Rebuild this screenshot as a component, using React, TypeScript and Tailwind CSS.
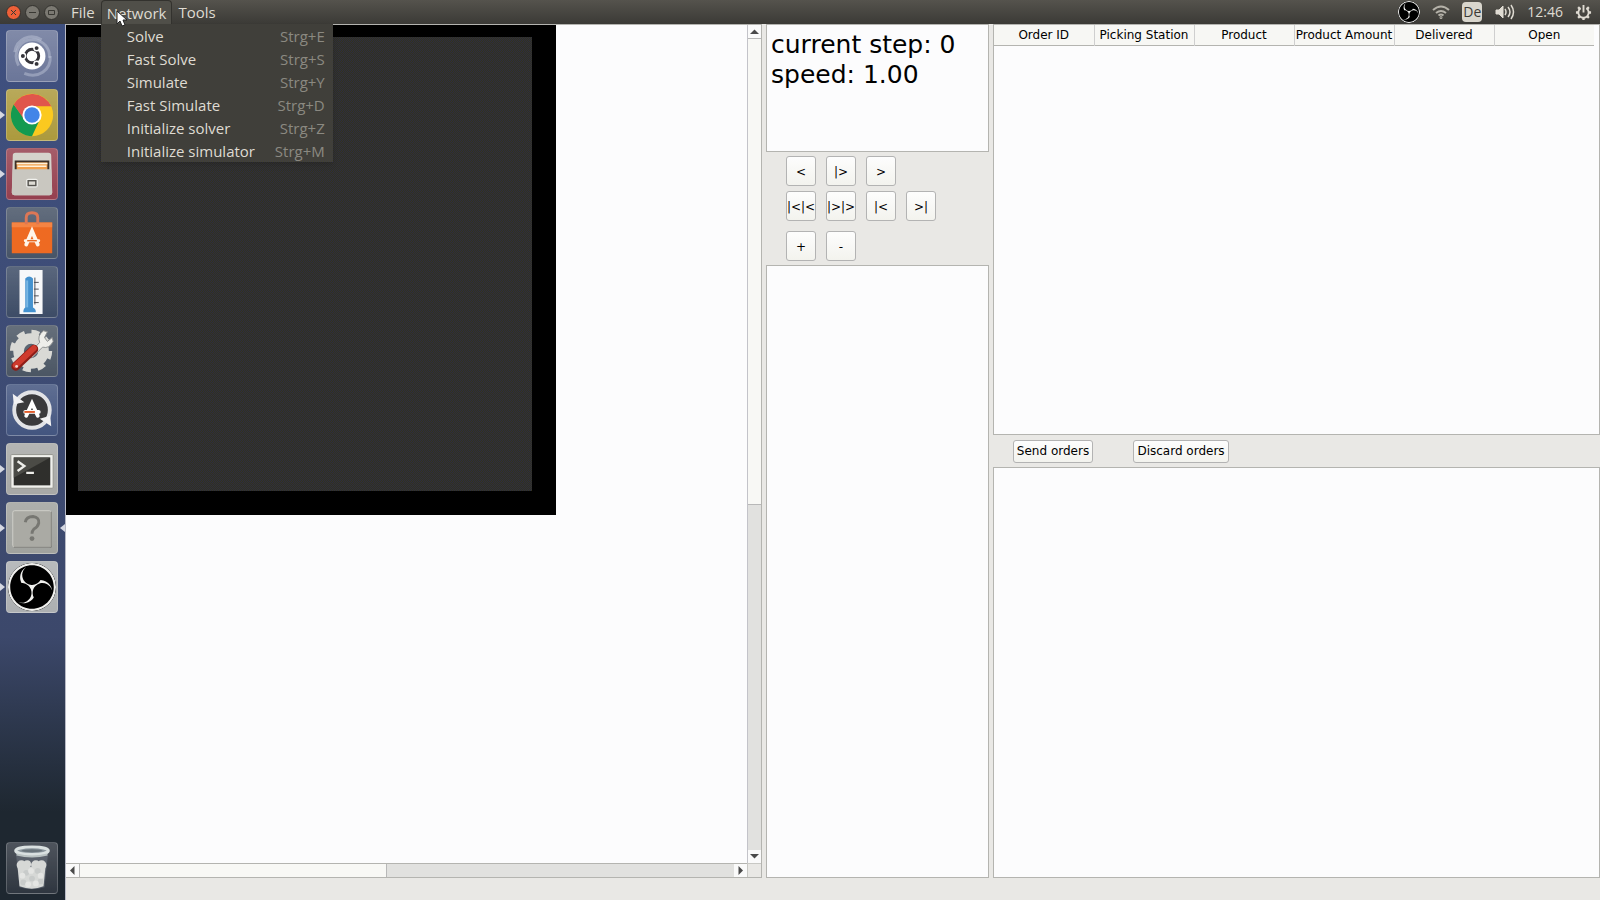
import { ReactNode } from "react";
import { SiObsstudio } from "react-icons/si";

const menuItems = [
  { label: "Solve", shortcut: "Strg+E" },
  { label: "Fast Solve", shortcut: "Strg+S" },
  { label: "Simulate", shortcut: "Strg+Y" },
  { label: "Fast Simulate", shortcut: "Strg+D" },
  { label: "Initialize solver", shortcut: "Strg+Z" },
  { label: "Initialize simulator", shortcut: "Strg+M" },
];

const columns = [
  "Order ID",
  "Picking Station",
  "Product",
  "Product Amount",
  "Delivered",
  "Open",
];

const controlRows = [
  { className: "", labels: ["<", "|>", ">"] },
  { className: "mt-[5px]", labels: ["|<|<", "|>|>", "|<", ">|"] },
  { className: "mt-[10px]", labels: ["+", "-"] },
];

const ObsIcon = ({ className }: { className: string }) => (
  <SiObsstudio className={`rounded-full bg-black text-[#f0f0ee] ${className}`} />
);

const UbuntuIcon = () => (
  <svg viewBox="0 0 52 52" className="size-full">
    <g fill="none" stroke="#c3c9dc" strokeOpacity=".45" strokeWidth="3">
      <path d="M12 36C5 22 14 8 28 9c10 1 17 9 16 19" />
      <path d="M8 22C10 8 24 2 36 9M18 44c14 6 28-3 27-18" />
    </g>
    <circle cx="26" cy="26" r="14" fill="#fff" />
    <circle cx="26" cy="26" r="7" fill="none" stroke="#35343a" strokeWidth="3" />
    <g stroke="#fff" strokeWidth="1.5" fill="#35343a">
      <circle cx="16.5" cy="26" r="2.8" />
      <circle cx="30.8" cy="17.8" r="2.8" />
      <circle cx="30.8" cy="34.2" r="2.8" />
    </g>
  </svg>
);

const ChromeIcon = () => (
  <svg viewBox="0 0 52 52" className="size-full">
    <circle cx="26" cy="26" r="22" fill="#fbc91f" />
    <path d="M7 15A22 22 0 0 0 26 48L34 31 26 26 18 30z" fill="#149a50" />
    <path d="M7 15 18 31 26 17H46A22 22 0 0 0 7 15z" fill="#e0564b" />
    <circle cx="26" cy="26" r="10" fill="#fff" />
    <circle cx="26" cy="26" r="8" fill="#4285e8" />
  </svg>
);

const FilesIcon = () => (
  <svg viewBox="0 0 52 52" className="size-full">
    <path d="M9 4h34q3 0 3 3l1 38q0 3-3 3H8q-3 0-3-3L6 7q0-3 3-3z" fill="#d5d3cc" />
    <path d="M8 12h36v10H8z" fill="#3c3029" />
    <path d="M10 14h32v9H10z" fill="#f0a04e" />
    <path d="M10 15h32M11 18h30" stroke="#fff1db" strokeWidth="1.5" />
    <path d="M6 21h40l1 24q0 3-3 3H8q-3 0-3-3z" fill="#c9c7c0" />
    <rect x="20" y="31" width="12" height="9" rx="2" fill="#f2f2ee" />
    <rect x="22" y="33" width="8" height="5" fill="#dedcd5" stroke="#55534e" strokeWidth="1.5" />
  </svg>
);

const SoftwareIcon = () => (
  <svg viewBox="0 0 52 52" className="size-full">
    <path d="M5 15h42v32H5z" fill="#ee6a22" />
    <path d="M5 15h42v5H5z" fill="#f58443" />
    <path d="M20 17V10q0-5 6-5t6 5v7" fill="none" stroke="#dc7756" strokeWidth="3" />
    <g stroke="#fff5e9" strokeWidth="4" strokeLinecap="round" fill="none">
      <path d="M20 38 26 24 32 38" />
      <path d="M19 34h14" strokeWidth="3" />
    </g>
    <path d="M21 34h10" stroke="#e66822" strokeWidth="1.5" />
  </svg>
);

const ThermometerIcon = () => (
  <svg viewBox="0 0 52 52" className="size-full">
    <path d="M13 3h24v46H13z" fill="#f7f8fa" />
    <path d="M19 12q4-4 8 0v30q3 1 3 5H17q0-4 2-5z" fill="#4592cf" />
    <path d="M21 14v28" stroke="#79b7e4" strokeWidth="2" />
    <path d="M29 11v28M28 16h5M28 23h5M28 30h5M28 37h5" stroke="#4a4d55" strokeWidth="1" />
  </svg>
);

const SettingsIcon = () => (
  <svg viewBox="0 0 52 52" className="size-full">
    <circle cx="25" cy="26" r="19" fill="none" stroke="#d9d9d5" strokeWidth="6" strokeDasharray="8 6.9" />
    <circle cx="25" cy="26" r="13" fill="none" stroke="#d9d9d5" strokeWidth="11" />
    <path d="m23 29 11-12q-3-7 4-12l4 1-3 6 3 4 5-4 1 4q-4 8-11 6L26 33z" fill="#eeeeea" stroke="#8c8f8f" strokeWidth="1" />
    <path d="M9 42 28 24" stroke="#8e1d17" strokeWidth="9" strokeLinecap="round" />
    <path d="M9 41 28 23" stroke="#cf3b2e" strokeWidth="6" strokeLinecap="round" />
    <circle cx="10" cy="42" r="1.5" fill="#f4d8d0" />
  </svg>
);

const UpdaterIcon = () => (
  <svg viewBox="0 0 52 52" className="size-full">
    <circle cx="26" cy="26" r="17" fill="#3a3a3c" />
    <circle cx="26" cy="26" r="18.5" fill="none" stroke="#e2e3e6" strokeWidth="4" />
    <path d="M6 9l1 11 11-2zM46 43l-1-11-11 3z" fill="#f1f1f3" />
    <path d="M20 32 26 19 32 32M19 28h14" fill="none" stroke="#fff" strokeWidth="4" strokeLinecap="round" />
    <path d="M18 28h11" stroke="#e05b2a" strokeWidth="2" />
  </svg>
);

const TerminalIcon = () => (
  <svg viewBox="0 0 52 52" className="size-full">
    <rect x="4" y="11" width="44" height="35" rx="1" fill="#f0f0ec" stroke="#92928d" />
    <rect x="7" y="14" width="38" height="29" fill="#2f2f2c" />
    <path d="M7 14h38L7 35z" fill="#4b4b46" />
    <path d="m11 18 7 5-7 5M20 30h8" fill="none" stroke="#eeeeea" strokeWidth="2.5" />
  </svg>
);

const UnknownIcon = () => (
  <svg viewBox="0 0 52 52" className="size-full">
    <rect x="6" y="8" width="40" height="38" rx="2" fill="#aaaaa4" stroke="#d0d0ca" />
    <path d="M7 46h39V9" fill="none" stroke="#74746f" strokeWidth="1" />
    <path d="M19 20q1-6 8-6 7 1 6 7-1 4-5 6-2 2-2 5" fill="none" stroke="#777772" strokeWidth="3" />
    <circle cx="26" cy="37" r="2.5" fill="#777772" />
  </svg>
);

const TrashIcon = () => (
  <svg viewBox="0 0 52 52" className="size-full">
    <path d="M9 8h34l-4 38q-13 4-26 0z" fill="#7c8490" fillOpacity=".4" />
    <g fill="#d6d8d6">
      <circle cx="15" cy="23" r="5" />
      <circle cx="21" cy="22" r="4" />
      <circle cx="30" cy="23" r="5" />
      <circle cx="36" cy="23" r="5" />
      <path d="M11 25h29l-2 20q-12 5-25 0z" />
    </g>
    <g fill="#c8cbca">
      <circle cx="20" cy="31" r="3" />
      <circle cx="32" cy="29" r="3" />
      <circle cx="26" cy="37" r="3" />
      <circle cx="17" cy="41" r="3" />
      <circle cx="35" cy="40" r="3" />
    </g>
    <g fill="#e4e5e3">
      <circle cx="25" cy="29" r="3" />
      <circle cx="16" cy="34" r="3" />
      <circle cx="35" cy="34" r="3" />
      <circle cx="22" cy="43" r="3" />
      <circle cx="30" cy="42" r="3" />
    </g>
    <ellipse cx="26" cy="8" rx="17" ry="4" fill="#8b969d" stroke="#d9e0e0" strokeWidth="3" />
    <ellipse cx="26" cy="8" rx="11" ry="1.5" fill="#68737a" />
    <path d="M10 12q16 4 32 0" fill="none" stroke="#b9c2c2" strokeWidth="2" />
  </svg>
);

const launchers = [
  { name: "Dash", tile: "bg-[#6b7699]", icon: <UbuntuIcon />, running: false },
  { name: "Chrome", tile: "bg-[#ac9a3d]", icon: <ChromeIcon />, running: true },
  { name: "Files", tile: "bg-[#95404f]", icon: <FilesIcon />, running: true },
  { name: "Software", tile: "bg-[#475467]", icon: <SoftwareIcon />, running: false },
  { name: "Monitor", tile: "bg-[#3d4c66]", icon: <ThermometerIcon />, running: false },
  { name: "Settings", tile: "bg-[#4b5664]", icon: <SettingsIcon />, running: false },
  { name: "Updater", tile: "bg-[#43557f]", icon: <UpdaterIcon />, running: false },
  { name: "Terminal", tile: "bg-[#a7a8a6]", icon: <TerminalIcon />, running: true },
  { name: "Application", tile: "bg-[#a0a29e]", icon: <UnknownIcon />, running: true, active: true },
  { name: "OBS", tile: "bg-[#acafb1]", icon: <ObsIcon className="size-12" />, running: true },
];

const Launcher = ({
  name,
  tile,
  icon,
  running,
  active,
}: {
  name: string;
  tile: string;
  icon: ReactNode;
  running?: boolean;
  active?: boolean;
}) => (
  <button aria-label={name} className="relative flex w-full justify-center pr-px">
    {running && (
      <svg viewBox="0 0 5 8" className="absolute left-0 top-[22px] h-2 w-[5px] fill-[#d5d8e2]">
        <path d="M0 0 5 4 0 8z" />
      </svg>
    )}
    <span
      className={`flex size-[52px] items-center justify-center rounded border border-white/20 bg-linear-to-b from-white/15 to-transparent ${tile}`}
    >
      {icon}
    </span>
    {active && (
      <svg viewBox="0 0 5 8" className="absolute right-0 top-[22px] h-2 w-[5px] fill-[#d5d8e2]">
        <path d="M5 0 0 4 5 8z" />
      </svg>
    )}
  </button>
);

const WindowButton = ({ name, color, path }: { name: string; color: string; path: string }) => (
  <button aria-label={name} className={`size-[15px] rounded-full border border-[#33322e] ${color}`}>
    <svg viewBox="0 0 13 13" className="size-full fill-none stroke-[#393833]">
      <path d={path} />
    </svg>
  </button>
);

const TopBar = () => (
  <header className="relative z-10 flex h-6 shrink-0 items-center justify-between bg-linear-to-b from-[#55534d] to-[#3b3a36] font-['Open_Sans','Noto_Sans',sans-serif] text-sm text-[#dfdbd2]">
    <div className="flex h-full items-center">
      <div className="flex w-[65px] gap-1 pl-[6px]">
        <WindowButton name="Close" color="bg-[#ee6038]" path="m4 4 5 5M9 4l-5 5" />
        <WindowButton name="Minimize" color="bg-[#7b7972]" path="M3 6.5h7" />
        <WindowButton name="Maximize" color="bg-[#7b7972]" path="M3.5 4.5h6v4h-6z" />
      </div>
      <nav className="flex h-full items-center text-[15px] leading-5">
        <button className="h-full px-[6px]">File</button>
        <div className="relative h-full">
          <button className="h-full rounded-t border border-b-0 border-[#33322e] bg-[#504f49] px-[5px]">
            Network
          </button>
          <ul className="absolute left-0 top-full w-[232px] bg-[#403f3a] shadow-md">
            {menuItems.map(({ label, shortcut }) => (
              <li key={label}>
                <button className="flex h-[23px] w-full items-center justify-between pl-[26px] pr-2">
                  <span>{label}</span>
                  <span className="text-[#8b8981]">{shortcut}</span>
                </button>
              </li>
            ))}
          </ul>
        </div>
        <button className="h-full px-[6px]">Tools</button>
      </nav>
      <svg viewBox="0 0 12 18" className="absolute left-[116px] top-[10px] h-[18px] w-3">
        <path d="M1 1v13l3-3 2 5 3-1-2-5h4z" fill="#fff" stroke="#222" />
      </svg>
    </div>
    <div className="flex items-center pr-2">
      <ObsIcon className="size-[22px]" />
      <svg viewBox="0 0 18 14" className="ml-3 h-[14px] w-[18px] fill-none stroke-[#b5b2a9] stroke-2">
        <path d="M1 5q8-7 16 0M4 8q5-4 10 0M6.500 10.500q2.500-2 5 0" />
        <circle cx="9" cy="12.500" r=".5" />
      </svg>
      <span className="ml-3 mr-px flex h-5 w-5 items-center justify-center rounded-sm bg-[#d9d6cd] text-sm font-medium text-[#3c3b37]">
        De
      </span>
      <svg viewBox="0 0 20 16" className="ml-3 h-4 w-5 fill-none stroke-[#dfdbd2]">
        <path d="M1 6h3l4-4v12l-4-4H1z" fill="#dfdbd2" />
        <path d="M10 5q2 3 0 6M13 3q4 5 0 10M16 1q5 7 0 14" strokeWidth="1.5" />
      </svg>
      <span className="ml-3">12:46</span>
      <svg viewBox="0 0 18 18" className="ml-3 size-[17px] fill-none stroke-[#dfdbd2]">
        <path d="M6 4.500a5.500 5.500 0 1 0 6 0M9 1v8" strokeWidth="2" />
        <path d="M1 9h2.500M14.500 9H17M3.300 14.700l2-2M14.700 14.700l-2-2M9 17v-3M3.300 3.300l2 2M14.700 3.300l-2 2" strokeWidth="2.500" />
      </svg>
    </div>
  </header>
);

const arrowPaths = {
  up: "M4.500 2.500 9 7H0z",
  down: "M0 2h9L4.500 6.500z",
  left: "M6.500 0v9L2 4.500z",
  right: "M2.500 0v9L7 4.500z",
};

const ScrollButton = ({ direction }: { direction: keyof typeof arrowPaths }) => (
  <button
    aria-label={`Scroll ${direction}`}
    className="flex size-[13px] shrink-0 items-center justify-center bg-[#fafafa]"
  >
    <svg viewBox="0 0 9 9" className="size-[9px] fill-[#4a4a4a]">
      <path d={arrowPaths[direction]} />
    </svg>
  </button>
);

const NetworkView = () => (
  <section className="grid min-w-0 flex-1 grid-cols-[1fr_14px] grid-rows-[1fr_14px] border-r border-b border-t border-[#b4b4b0]">
    <div className="overflow-hidden bg-[#fcfcfd]">
      <div className="w-fit bg-black pb-6 pl-3 pr-6 pt-3">
        <div className="size-[454px] bg-[repeating-conic-gradient(#2d2d40_0_25%,#32321e_0_50%)] bg-size-[2px_2px]" />
      </div>
    </div>
    <div className="flex flex-col border-l border-[#c3c3c9]">
      <ScrollButton direction="up" />
      <div className="flex-[466] border-y border-[#b8b8b8] bg-[#f8f8f5]" />
      <div className="flex-[345] bg-[#e1e1df]" />
      <ScrollButton direction="down" />
    </div>
    <div className="flex border-t border-[#b4b4b0]">
      <ScrollButton direction="left" />
      <div className="flex-[306] border-x border-[#b8b8b8] bg-[#f8f8f5]" />
      <div className="flex-[348] bg-[#e1e1df]" />
      <ScrollButton direction="right" />
    </div>
    <div className="border-l border-t border-[#c8c8c4]" />
  </section>
);

const panel = "border border-[#b4b4b0] bg-[#fcfcfd]";
const button =
  "rounded-[3px] border border-[#b3b3b3] bg-linear-to-b from-[#fdfdfd] to-[#f3f3ee]";

const StepControls = () => (
  <section className="flex w-[223px] shrink-0 flex-col">
    <div className={`h-32 px-1 pt-[5px] text-[25px] leading-[30px] ${panel}`}>
      <p>current step: 0</p>
      <p>speed: 1.00</p>
    </div>
    <div className="h-[113px] pl-5 pt-1 text-xs">
      {controlRows.map(({ className, labels }) => (
        <div key={labels[0]} className={`flex gap-[10px] ${className}`}>
          {labels.map((label) => (
            <button
              key={label}
              className={`flex size-[30px] items-center justify-center whitespace-nowrap pt-px ${button}`}
            >
              {label}
            </button>
          ))}
        </div>
      ))}
    </div>
    <div className={`flex-1 ${panel}`} />
  </section>
);

const Orders = () => (
  <section className="flex w-[607px] shrink-0 flex-col text-xs">
    <div className={`min-h-0 flex-[411] pr-[5px] ${panel}`}>
      <table className="w-full table-fixed border-collapse">
        <thead>
          <tr className="h-5 border-b border-[#b4b4b0] bg-[#f7f7f4]">
            {columns.map((column) => (
              <th
                key={column}
                className="whitespace-nowrap border-r border-[#cfcfcf] p-0 font-normal last:border-r-0"
              >
                {column}
              </th>
            ))}
          </tr>
        </thead>
      </table>
    </div>
    <div className="flex h-8 shrink-0 items-center gap-10 pl-5">
      <button className={`h-[23px] w-20 ${button}`}>Send orders</button>
      <button className={`h-[23px] w-24 ${button}`}>Discard orders</button>
    </div>
    <div className={`flex-[411] ${panel}`} />
  </section>
);

export default function App() {
  return (
    <div className="flex h-screen flex-col bg-[#e9e8e5] font-['DejaVu_Sans',sans-serif] text-black">
      <TopBar />
      <div className="flex min-h-0 flex-1">
        <aside className="flex w-[66px] shrink-0 flex-col justify-between border-r border-[#b8bac6] bg-linear-to-b from-[#3f5080] via-[#3c486b] via-70% to-[#1e2730] to-90% pb-[6px] pt-[6px]">
          <div className="flex flex-col gap-[7px]">
            {launchers.map((launcher) => (
              <Launcher key={launcher.name} {...launcher} />
            ))}
          </div>
          <Launcher name="Trash" tile="bg-[#2f3640]" icon={<TrashIcon />} />
        </aside>
        <main className="flex min-w-0 flex-1 gap-1 pb-[22px]">
          <NetworkView />
          <StepControls />
          <Orders />
        </main>
      </div>
    </div>
  );
}
